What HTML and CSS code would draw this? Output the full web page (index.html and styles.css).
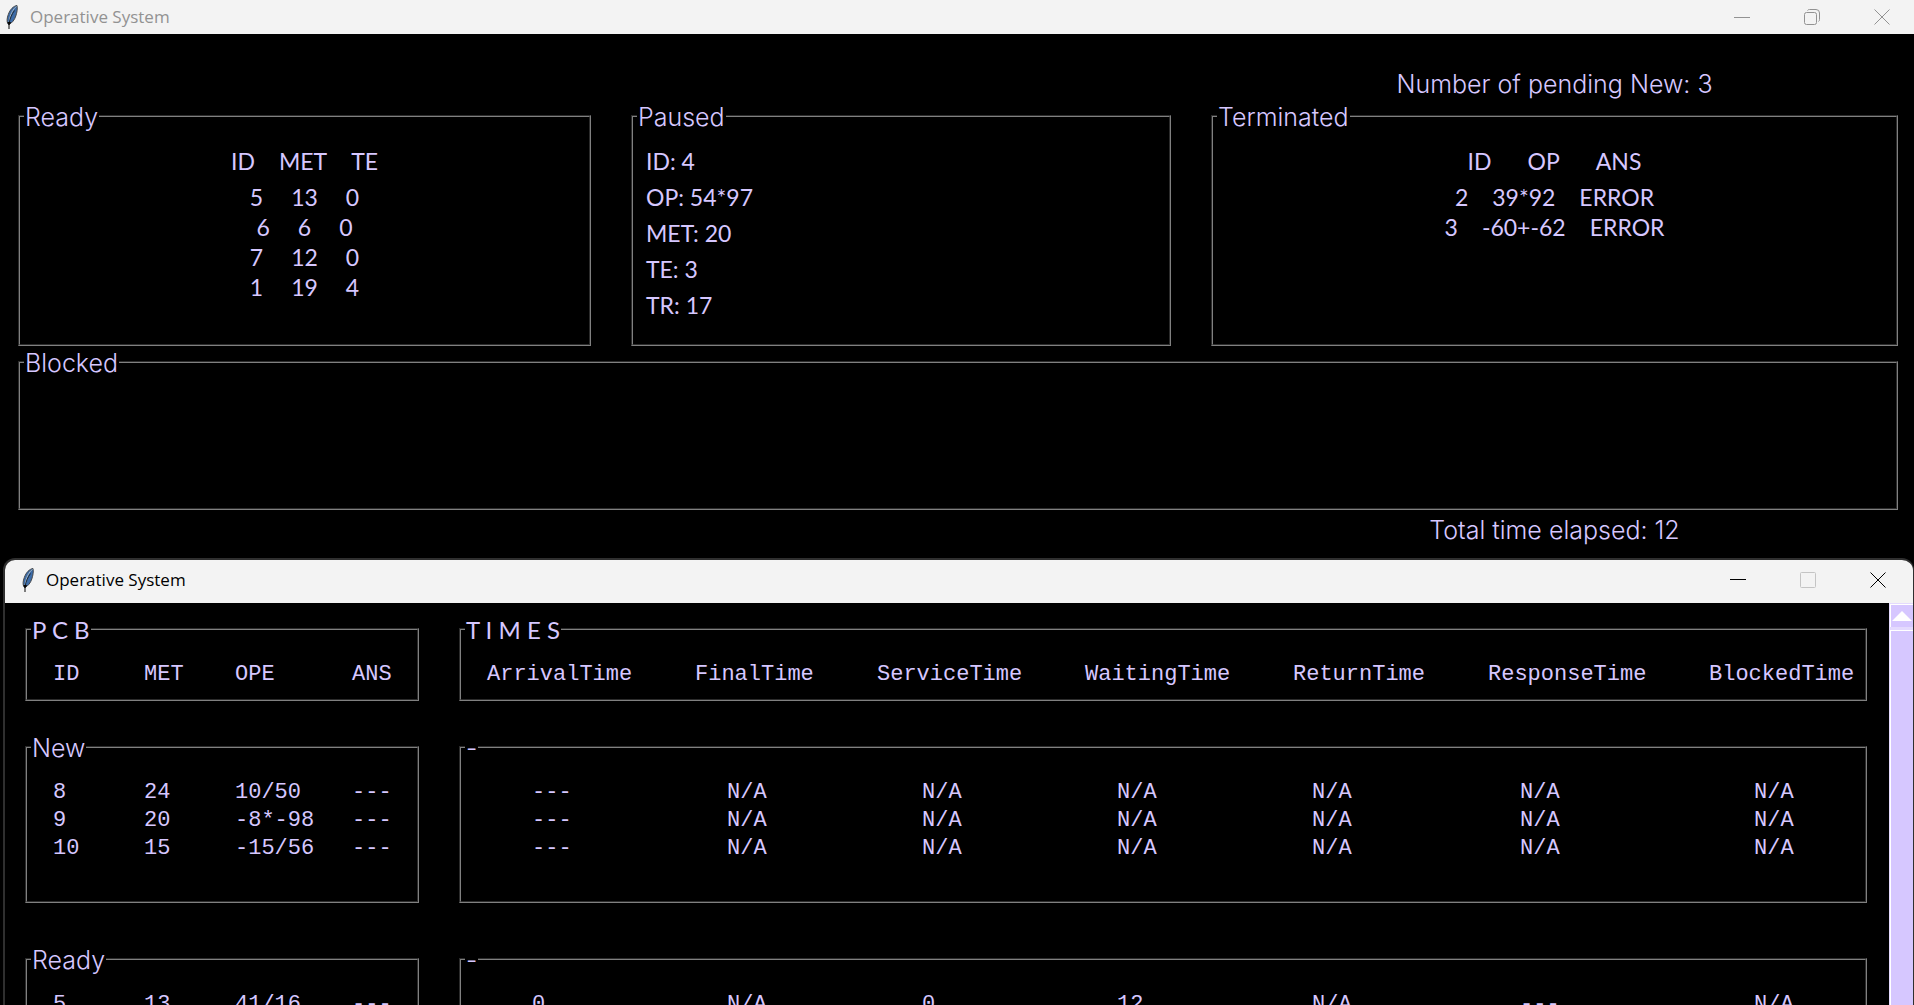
FILE: index.html
```html
<!DOCTYPE html>
<html lang="en">
<head>
<meta charset="utf-8">
<title>Operative System</title>
<link rel="stylesheet" href="styles.css">
</head>
<body>
<svg class="defs" aria-hidden="true">
  <symbol id="feather" viewBox="0 0 12 24">
    <path d="M11 0.5C7.500 1 4 4.500 2.300 9.500C1 13 0.500 16.500 2 19L3 19.500C6 18 8.500 15 9.800 11C11 7.500 11.700 3.500 11 0.500Z" fill="#3d6ca8" stroke="#45484b"/>
    <path d="M10.500 1.500C7 4 4 9 3 18" fill="none" stroke="#a8b6bf"/>
    <path d="M8.500 5.500C6 9 4 13 3 18.500" fill="none" stroke="#1b2734"/>
    <path d="M1.500 17H5L3.500 20V24H2.500V20Z" fill="#050505"/>
  </symbol>
</svg>

<main class="window main-window">
  <header class="titlebar inactive">
    <svg class="feather"><use href="#feather"/></svg>
    <h1>Operative System</h1>
    <button type="button" aria-label="Minimize"><svg viewBox="0 0 16 16"><path d="M0 8.500H16"/></svg></button>
    <button type="button" aria-label="Restore"><svg viewBox="0 0 16 16"><rect x="0.500" y="3.500" width="12" height="12" rx="2"/><path d="M3.500 1.500Q4 0.500 5.500 0.500H12Q15.500 0.500 15.500 4V10.500Q15.500 12 14.500 12.500"/></svg></button>
    <button type="button" aria-label="Close"><svg viewBox="0 0 16 16"><path d="M0.500 0.500L15.500 15.500M15.500 0.500L0.500 15.500"/></svg></button>
  </header>
  <div class="board">
    <p class="pending">Number of pending New: 3</p>
    <fieldset>
      <legend>Ready</legend>
      <table class="queue">
        <thead><tr><th>ID</th><th>MET</th><th>TE</th></tr></thead>
        <tbody>
          <tr><td>5</td><td>13</td><td>0</td></tr>
          <tr><td>6</td><td>6</td><td>0</td></tr>
          <tr><td>7</td><td>12</td><td>0</td></tr>
          <tr><td>1</td><td>19</td><td>4</td></tr>
        </tbody>
      </table>
    </fieldset>
    <fieldset>
      <legend>Paused</legend>
      <ul class="process">
        <li>ID: 4</li>
        <li>OP: 54*97</li>
        <li>MET: 20</li>
        <li>TE: 3</li>
        <li>TR: 17</li>
      </ul>
    </fieldset>
    <fieldset>
      <legend>Terminated</legend>
      <table class="queue results">
        <thead><tr><th>ID</th><th>OP</th><th>ANS</th></tr></thead>
        <tbody>
          <tr><td>2</td><td>39*92</td><td>ERROR</td></tr>
          <tr><td>3</td><td>-60+-62</td><td>ERROR</td></tr>
        </tbody>
      </table>
    </fieldset>
    <fieldset class="blocked">
      <legend>Blocked</legend>
    </fieldset>
    <p class="elapsed">Total time elapsed: 12</p>
  </div>
</main>

<section class="window pcb-window">
  <header class="titlebar">
    <svg class="feather"><use href="#feather"/></svg>
    <h2>Operative System</h2>
    <button type="button" aria-label="Minimize"><svg viewBox="0 0 16 16"><path d="M0 7.500H16"/></svg></button>
    <button type="button" aria-label="Maximize" disabled><svg viewBox="0 0 16 16"><rect x="0.500" y="0.500" width="15" height="15" rx="1"/></svg></button>
    <button type="button" aria-label="Close"><svg viewBox="0 0 16 16"><path d="M0.500 0.500L15.500 15.500M15.500 0.500L0.500 15.500"/></svg></button>
  </header>
  <div class="pcb-body">
    <div class="records">
      <div class="record">
        <fieldset>
          <legend class="spaced">P C B</legend>
          <table class="pcb"><thead><tr><th>ID</th><th>MET</th><th>OPE</th><th>ANS</th></tr></thead></table>
        </fieldset>
        <fieldset>
          <legend class="spaced">T I M E S</legend>
          <table class="times-head"><thead><tr><th>ArrivalTime</th><th>FinalTime</th><th>ServiceTime</th><th>WaitingTime</th><th>ReturnTime</th><th>ResponseTime</th><th>BlockedTime</th></tr></thead></table>
        </fieldset>
      </div>
      <div class="record state">
        <fieldset>
          <legend>New</legend>
          <table class="pcb">
            <tr><td>8</td><td>24</td><td>10/50</td><td>---</td></tr>
            <tr><td>9</td><td>20</td><td>-8*-98</td><td>---</td></tr>
            <tr><td>10</td><td>15</td><td>-15/56</td><td>---</td></tr>
          </table>
        </fieldset>
        <fieldset>
          <legend>-</legend>
          <table class="times">
            <tr><td>---</td><td>N/A</td><td>N/A</td><td>N/A</td><td>N/A</td><td>N/A</td><td>N/A</td></tr>
            <tr><td>---</td><td>N/A</td><td>N/A</td><td>N/A</td><td>N/A</td><td>N/A</td><td>N/A</td></tr>
            <tr><td>---</td><td>N/A</td><td>N/A</td><td>N/A</td><td>N/A</td><td>N/A</td><td>N/A</td></tr>
          </table>
        </fieldset>
      </div>
      <div class="record state">
        <fieldset>
          <legend>Ready</legend>
          <table class="pcb">
            <tr><td>5</td><td>13</td><td>41/16</td><td>---</td></tr>
          </table>
        </fieldset>
        <fieldset>
          <legend>-</legend>
          <table class="times">
            <tr><td>0</td><td>N/A</td><td>0</td><td>12</td><td>N/A</td><td>---</td><td>N/A</td></tr>
          </table>
        </fieldset>
      </div>
    </div>
    <div class="scrollbar">
      <button type="button" aria-label="Scroll up"><svg viewBox="0 0 20 10"><path d="M10 0L20 10H0Z"/></svg></button>
      <div class="thumb"></div>
    </div>
  </div>
</section>
</body>
</html>
```
FILE: styles.css
```css
* { box-sizing: border-box; }

html, body { height: 100%; }

body {
  margin: 0;
  background: #000;
  color: #d6c7ff;
  font: 23px/32px "Century Gothic", "URW Gothic", Lato, sans-serif;
  font-variant-ligatures: none;
  position: relative;
  overflow: hidden;
}

h1, h2, p, ul { margin: 0; padding: 0; }
.defs { position: absolute; width: 0; height: 0; }

/* Title bars */
.titlebar {
  display: flex;
  align-items: center;
  height: 34px;
  padding-left: 6px;
  background: #f3f3f3;
  color: #000;
}
.titlebar h1, .titlebar h2 {
  flex: 1;
  font: 17px/24px "Segoe UI", "Open Sans", sans-serif;
}
.feather { width: 12px; height: 24px; margin-right: 12px; }
.titlebar button {
  display: grid;
  place-items: center;
  width: 64px;
  height: 100%;
  margin-left: 6px;
  padding: 0;
  border: 0;
  background: none;
  color: #000;
}
.titlebar button:disabled { color: #c4c4c4; }
.titlebar button svg { width: 16px; height: 16px; fill: none; stroke: currentColor; }
.inactive, .inactive button { color: #929292; }

/* Framed groups */
fieldset {
  min-width: 0;
  margin: 0;
  padding: 0 4px;
  border: 2px groove #808080;
}
legend { padding: 3px 1px 1px; line-height: 28px; }
legend, .pending, .elapsed {
  font-family: "Century Gothic", "URW Gothic", Inter, sans-serif;
  font-size: 25px;
  font-weight: 300;
}
.spaced { font-family: "Century Gothic", "URW Gothic", Lato, sans-serif; font-size: 24px; font-weight: 400; }

table { border-collapse: collapse; border-spacing: 0; }
th, td { padding: 0; font-weight: inherit; text-align: left; white-space: nowrap; }

/* Main window */
.board {
  display: grid;
  grid-template-columns: 573fr 540fr 687fr;
  grid-template-rows: auto 246px 164px auto;
  column-gap: 40px;
  padding: 34px 16px 0 18px;
}
.pending, .elapsed { grid-column: 3; text-align: center; }
.elapsed { padding-top: 4px; }
.blocked { grid-column: 1 / -1; }

.queue { display: block; padding-top: 11px; }
.queue thead, .queue tbody { display: block; }
.queue tr { display: flex; justify-content: center; gap: 28px; line-height: 30px; }
.queue thead tr { gap: 24px; line-height: 36px; padding-bottom: 3px; }
.results tr { gap: 24px; }
.results thead tr { gap: 36px; }

.process { padding: 11px 9px 0; list-style: none; line-height: 36px; }

/* PCB window */
.pcb-window {
  position: absolute;
  top: 558px;
  right: 0;
  bottom: 0;
  left: 3px;
  display: flex;
  flex-direction: column;
  overflow: hidden;
  border: 2px solid #2f2f2f;
  border-width: 2px 1px 0 2px;
  border-radius: 12px 12px 0 0;
  background: #000;
}
.pcb-window .titlebar { flex: none; height: 43px; padding: 0 3px 3px 17px; }
.pcb-body { display: flex; flex: 1; min-height: 0; }
.records { flex: 1; min-width: 0; padding: 10px 22px 0 20px; overflow: hidden; }
.record { display: grid; grid-template-columns: 394fr 1408fr; column-gap: 40px; margin-bottom: 30px; }
.record fieldset { padding-bottom: 10px; }
.state { margin-bottom: 40px; }
.state fieldset { min-height: 172px; }

.record table {
  table-layout: fixed;
  width: calc(100% - 22px);
  margin: 16px 0 0 22px;
  font: 22px/28px Consolas, "Liberation Mono", monospace;
}
.record .times { width: calc(100% - 67px); margin-left: 67px; }

.pcb :is(th, td) { width: 91px; }
.pcb :is(th, td):nth-child(3) { width: 117px; }
.pcb :is(th, td):nth-child(4) { width: 61px; }

.times-head th { width: 208px; }
.times-head th:nth-child(2) { width: 182px; }
.times-head th:nth-child(5) { width: 195px; }
.times-head th:nth-child(6) { width: 221px; }
.times-head th:nth-child(7) { width: 152px; }

.times td { width: 195px; }
.times td:nth-child(5) { width: 208px; }
.times td:nth-child(6) { width: 234px; }
.times td:nth-child(7) { width: 107px; }

/* Scrollbar */
.scrollbar {
  display: flex;
  flex-direction: column;
  gap: 3px;
  width: 24px;
  padding: 1px 0 0 1px;
  background: #e4dafe;
}
.scrollbar button {
  display: grid;
  place-items: center;
  height: 23px;
  padding: 0;
  border: solid #fff;
  border-width: 1px 0 0 1px;
  background: #d6c7ff;
}
.scrollbar svg { width: 20px; height: 10px; fill: #fff; }
.thumb { flex: 1; border: solid #fff; border-width: 1px 0 0 1px; background: #d6c7ff; }
```
